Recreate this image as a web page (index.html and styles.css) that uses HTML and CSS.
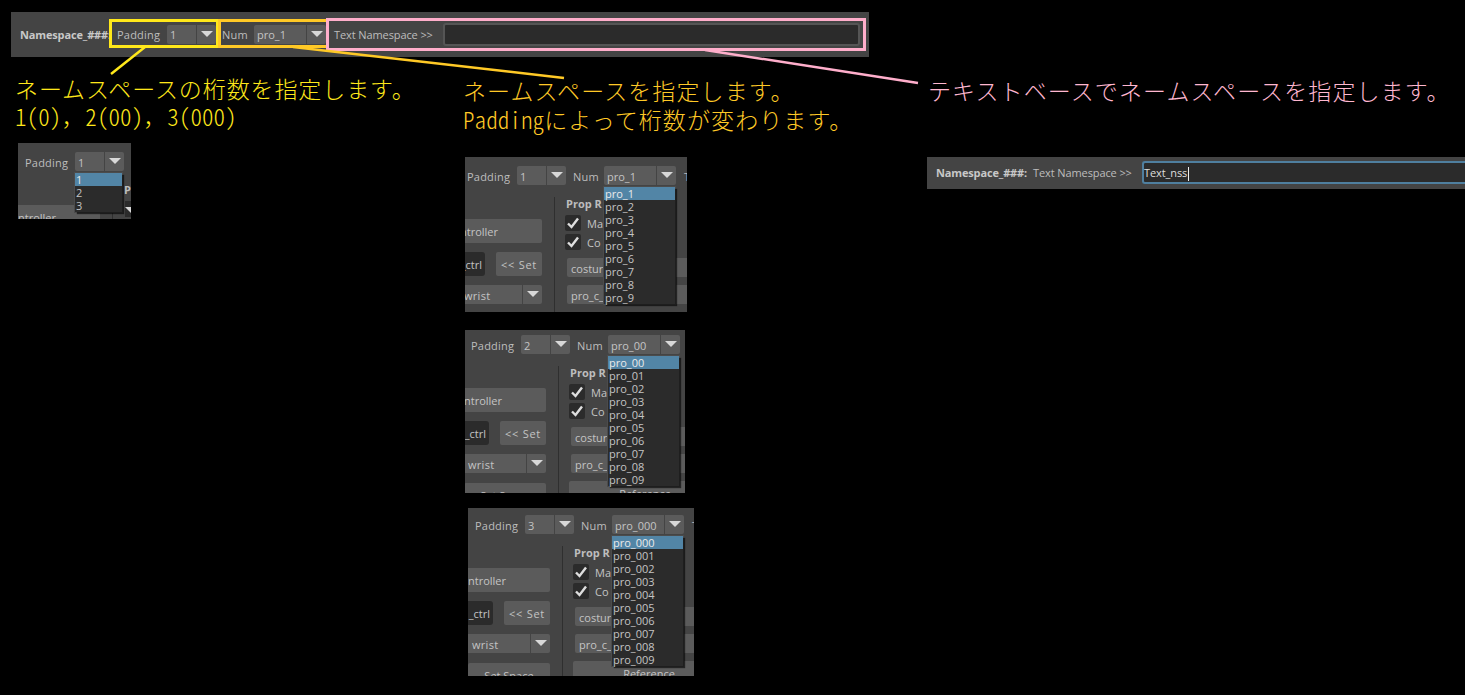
FILE: index.html
```html
<!DOCTYPE html>
<html lang="ja">

<head>
    <meta charset="UTF-8">
    <title>Namespace</title>
    <link rel="stylesheet" href="styles.css">
</head>

<body>
    <main class="canvas">
        <!-- main namespace bar -->
        <div class="bar bar-main">
            <span class="bar-title">Namespace_###:</span>
            <span class="lbl lbl-padding">Padding</span>
            <div class="combo combo-sm"><span class="combo-text">1</span><span class="combo-arrow"><i class="tri"></i></span></div>
            <span class="lbl lbl-num">Num</span>
            <div class="combo combo-lg"><span class="combo-text">pro_1</span><span class="combo-arrow"><i class="tri"></i></span></div>
            <span class="lbl lbl-text">Text Namespace &gt;&gt;</span>
            <div class="field field-main"></div>
        </div>

        <!-- annotation frames and leaders -->
        <div class="frame frame-yellow"></div>
        <div class="frame frame-orange"></div>
        <div class="frame frame-pink"></div>
        <svg class="leaders" width="1465" height="695" viewBox="0 0 1465 695">
            <line x1="145" y1="47" x2="111" y2="74" stroke="#ffe81a" stroke-width="2.5" />
            <line x1="293" y1="47" x2="564" y2="78" stroke="#ffc926" stroke-width="2.5" />
            <line x1="705" y1="50" x2="918" y2="83" stroke="#ffaecb" stroke-width="2.5" />
        </svg>

        <p class="note note-yellow">ネームスペースの桁数を指定します。<br><span class="half">1(0)</span>&#65292;<span class="half">2(00)</span>&#65292;<span class="half">3(000)</span></p>
        <p class="note note-orange">ネームスペースを指定します。<br><span class="half">Padding</span>によって桁数が変わります。</p>
        <p class="note note-pink">テキストベースでネームスペースを指定します。</p>

        <!-- padding dropdown crop -->
        <section class="crop crop-a">
            <div class="ui">
                <div class="ui-top">
                    <span class="lbl ui-padding">Padding</span>
                    <div class="combo combo-sm"><span class="combo-text">1</span><span class="combo-arrow"><i class="tri"></i></span></div>
                </div>
                <div class="ui-body">
                    <div class="col-left">
                        <div class="btn btn-ctrl">ntroller</div>
                    </div>
                    <div class="sep"></div>
                    <div class="col-right">
                        <div class="col-title">Prop R</div>
                        <span class="dark-arrow"><i class="tri"></i></span>
                    </div>
                </div>
                <ul class="list list-padding">
                    <li class="sel">1</li>
                    <li>2</li>
                    <li>3</li>
                </ul>
            </div>
        </section>

        <!-- padding 1 -->
        <section class="crop crop-b">
            <div class="ui">
                <div class="ui-top">
                    <span class="lbl ui-padding">Padding</span>
                    <div class="combo combo-sm"><span class="combo-text">1</span><span class="combo-arrow"><i class="tri"></i></span></div>
                    <span class="lbl ui-num">Num</span>
                    <div class="combo combo-lg"><span class="combo-text">pro_1</span><span class="combo-arrow"><i class="tri"></i></span></div>
                    <span class="lbl ui-t">T</span>
                </div>
                <div class="ui-body">
                    <div class="col-left">
                        <div class="btn btn-ctrl">ntroller</div>
                        <div class="row-set">
                            <div class="ctrl-field">_ctrl</div>
                            <div class="btn btn-set">&lt;&lt; Set</div>
                        </div>
                        <div class="combo combo-wrist"><span class="combo-text">wrist</span><span class="combo-arrow"><i class="tri"></i></span></div>
                    </div>
                    <div class="sep"></div>
                    <div class="col-right">
                        <div class="col-title">Prop R</div>
                        <div class="check-row"><span class="check"><svg width="16" height="16" viewBox="0 0 16 16"><path d="M3 8.5 L6.5 12 L13 3.5" fill="none" stroke="#dedede" stroke-width="2.4" /></svg></span>Ma</div>
                        <div class="check-row"><span class="check"><svg width="16" height="16" viewBox="0 0 16 16"><path d="M3 8.5 L6.5 12 L13 3.5" fill="none" stroke="#dedede" stroke-width="2.4" /></svg></span>Co</div>
                        <div class="wide wide-first">costur</div>
                        <div class="wide">pro_c_</div>
                    </div>
                </div>
                <ul class="list list-num">
                    <li class="sel">pro_1</li>
                    <li>pro_2</li>
                    <li>pro_3</li>
                    <li>pro_4</li>
                    <li>pro_5</li>
                    <li>pro_6</li>
                    <li>pro_7</li>
                    <li>pro_8</li>
                    <li>pro_9</li>
                </ul>
            </div>
        </section>

        <!-- padding 2 -->
        <section class="crop crop-c">
            <div class="ui">
                <div class="ui-top">
                    <span class="lbl ui-padding">Padding</span>
                    <div class="combo combo-sm"><span class="combo-text">2</span><span class="combo-arrow"><i class="tri"></i></span></div>
                    <span class="lbl ui-num">Num</span>
                    <div class="combo combo-lg"><span class="combo-text">pro_00</span><span class="combo-arrow"><i class="tri"></i></span></div>
                </div>
                <div class="ui-body">
                    <div class="col-left">
                        <div class="btn btn-ctrl">ntroller</div>
                        <div class="row-set">
                            <div class="ctrl-field">_ctrl</div>
                            <div class="btn btn-set">&lt;&lt; Set</div>
                        </div>
                        <div class="combo combo-wrist"><span class="combo-text">wrist</span><span class="combo-arrow"><i class="tri"></i></span></div>
                        <div class="btn btn-space">Set Space</div>
                    </div>
                    <div class="sep"></div>
                    <div class="col-right">
                        <div class="col-title">Prop R</div>
                        <div class="check-row"><span class="check"><svg width="16" height="16" viewBox="0 0 16 16"><path d="M3 8.5 L6.5 12 L13 3.5" fill="none" stroke="#dedede" stroke-width="2.4" /></svg></span>Ma</div>
                        <div class="check-row"><span class="check"><svg width="16" height="16" viewBox="0 0 16 16"><path d="M3 8.5 L6.5 12 L13 3.5" fill="none" stroke="#dedede" stroke-width="2.4" /></svg></span>Co</div>
                        <div class="wide wide-first">costur</div>
                        <div class="wide">pro_c_</div>
                        <div class="btn btn-ref">Reference</div>
                    </div>
                </div>
                <ul class="list list-num">
                    <li class="sel">pro_00</li>
                    <li>pro_01</li>
                    <li>pro_02</li>
                    <li>pro_03</li>
                    <li>pro_04</li>
                    <li>pro_05</li>
                    <li>pro_06</li>
                    <li>pro_07</li>
                    <li>pro_08</li>
                    <li>pro_09</li>
                </ul>
            </div>
        </section>

        <!-- padding 3 -->
        <section class="crop crop-d">
            <div class="ui">
                <div class="ui-top">
                    <span class="lbl ui-padding">Padding</span>
                    <div class="combo combo-sm"><span class="combo-text">3</span><span class="combo-arrow"><i class="tri"></i></span></div>
                    <span class="lbl ui-num">Num</span>
                    <div class="combo combo-lg"><span class="combo-text">pro_000</span><span class="combo-arrow"><i class="tri"></i></span></div>
                    <span class="lbl ui-t">T</span>
                </div>
                <div class="ui-body">
                    <div class="col-left">
                        <div class="btn btn-ctrl">ntroller</div>
                        <div class="row-set">
                            <div class="ctrl-field">_ctrl</div>
                            <div class="btn btn-set">&lt;&lt; Set</div>
                        </div>
                        <div class="combo combo-wrist"><span class="combo-text">wrist</span><span class="combo-arrow"><i class="tri"></i></span></div>
                        <div class="btn btn-space">Set Space</div>
                    </div>
                    <div class="sep"></div>
                    <div class="col-right">
                        <div class="col-title">Prop R</div>
                        <div class="check-row"><span class="check"><svg width="16" height="16" viewBox="0 0 16 16"><path d="M3 8.5 L6.5 12 L13 3.5" fill="none" stroke="#dedede" stroke-width="2.4" /></svg></span>Ma</div>
                        <div class="check-row"><span class="check"><svg width="16" height="16" viewBox="0 0 16 16"><path d="M3 8.5 L6.5 12 L13 3.5" fill="none" stroke="#dedede" stroke-width="2.4" /></svg></span>Co</div>
                        <div class="wide wide-first">costur</div>
                        <div class="wide">pro_c_</div>
                        <div class="btn btn-ref">Reference</div>
                    </div>
                </div>
                <ul class="list list-num">
                    <li class="sel">pro_000</li>
                    <li>pro_001</li>
                    <li>pro_002</li>
                    <li>pro_003</li>
                    <li>pro_004</li>
                    <li>pro_005</li>
                    <li>pro_006</li>
                    <li>pro_007</li>
                    <li>pro_008</li>
                    <li>pro_009</li>
                </ul>
            </div>
        </section>

        <!-- text namespace bar -->
        <div class="bar bar-text">
            <span class="bar-title">Namespace_###:</span>
            <span class="lbl lbl-text">Text Namespace &gt;&gt;</span>
            <div class="field field-focus">Text_nss<i class="caret"></i></div>
        </div>
    </main>
</body>

</html>
```

FILE: styles.css
```css
body {
    margin: 0;
    background-color: #000;
    font-family: "Open Sans", "Noto Sans", sans-serif;
    font-size: 11px;
    color: #c4c4c4;
}

.canvas {
    position: relative;
    width: 1465px;
    height: 695px;
    overflow: hidden;
}

/* namespace bars */
.bar {
    position: absolute;
    display: flex;
    align-items: center;
    background-color: #444;
    white-space: nowrap;
}

.bar-main {
    left: 11px;
    top: 12px;
    width: 849px;
    height: 45px;
    padding-left: 9px;
}

.bar-text {
    left: 927px;
    top: 157px;
    width: 529px;
    height: 31px;
    padding: 0 0 1px 9px;
}

.bar-title {
    width: 97px;
    font-weight: 700;
    letter-spacing: -0.15px;
    color: #c8c8c8;
}

.lbl {
    padding-top: 1px;
    color: #bdbdbd;
    letter-spacing: 0.2px;
}

.bar .lbl {
    padding-top: 0;
}

.bar .combo {
    line-height: 20px;
}

.lbl-padding {
    width: 50px;
}

.lbl-num {
    width: 32px;
    padding-left: 6px;
}

.lbl-text {
    width: 109px;
    letter-spacing: -0.1px;
}

.bar-main .lbl-text {
    margin-left: 8px;
}

.field {
    box-sizing: border-box;
    background-color: #2b2b2b;
    border: 2px solid #555;
    border-radius: 3px;
}

.field-main {
    width: 417px;
    height: 23px;
}

.field-focus {
    width: 323px;
    height: 23px;
    line-height: 19px;
    border-color: #4f7f9f;
    border-right: 0;
    border-radius: 3px 0 0 3px;
    letter-spacing: -0.1px;
    color: #ddd;
}

.caret {
    display: inline-block;
    width: 1px;
    height: 14px;
    margin-left: 1px;
    vertical-align: middle;
    background-color: #eee;
}

/* combo boxes */
.combo {
    display: flex;
    gap: 1px;
    height: 19px;
    line-height: 22px;
    flex: none;
}

.combo-text {
    flex: 1;
    padding-left: 3px;
    border-radius: 2px 0 0 2px;
    background-color: #5b5b5b;
    overflow: hidden;
}

.combo-arrow {
    display: flex;
    justify-content: center;
    width: 19px;
    border-radius: 0 2px 2px 0;
    background-color: #5b5b5b;
}

.tri {
    width: 0;
    height: 0;
    margin-top: 6px;
    border-left: 6px solid transparent;
    border-right: 6px solid transparent;
    border-top: 6px solid #d8d8d8;
}

.combo-sm {
    width: 49px;
}

.combo-lg {
    width: 72px;
}

.combo-wrist {
    width: 85px;
}

.combo-wrist .combo-text {
    padding-left: 7px;
    letter-spacing: 0.3px;
}

/* cropped window pieces */
.crop {
    position: absolute;
    overflow: hidden;
    background-color: #444;
}

.crop-a {
    left: 18px;
    top: 143px;
    width: 113px;
    height: 76px;
}

.crop-b {
    left: 465px;
    top: 157px;
    width: 222px;
    height: 155px;
}

.crop-c {
    left: 465px;
    top: 330px;
    width: 220px;
    height: 163px;
}

.crop-d {
    left: 468px;
    top: 508px;
    width: 226px;
    height: 168px;
}

.ui {
    position: relative;
    width: 300px;
}

.crop-a .ui {
    margin: 9px 0 0 -3px;
}

.crop-b .ui {
    margin: 9px 0 0 -8px;
}

.crop-c .ui {
    margin: 5px 0 0 -4px;
}

.crop-d .ui {
    margin: 7px 0 0 -3px;
}

.ui-top {
    display: flex;
    align-items: center;
    padding-left: 10px;
    white-space: nowrap;
}

.ui-padding {
    width: 50px;
}

.ui-num {
    width: 31px;
    padding-left: 7px;
}

.ui-t {
    margin-left: 8px;
}

.ui-body {
    display: grid;
    grid-template-columns: 85px 1px 150px;
    column-gap: 12px;
    margin-top: 12px;
}

.col-left {
    display: flex;
    flex-direction: column;
    gap: 9px;
    padding-top: 22px;
    white-space: nowrap;
}

.btn {
    height: 24px;
    line-height: 26px;
    border-radius: 2px;
    background-color: #5b5b5b;
    text-align: center;
}

.btn-ctrl {
    padding-right: 44px;
    text-align: right;
}

.row-set {
    display: flex;
    gap: 11px;
}

.ctrl-field {
    display: flex;
    justify-content: flex-end;
    box-sizing: border-box;
    width: 28px;
    height: 24px;
    line-height: 26px;
    padding-right: 3px;
    border-radius: 3px;
    background-color: #2b2b2b;
}

.btn-set {
    width: 46px;
    letter-spacing: 0.7px;
}

.btn-space {
    margin: 1px 0 0 3px;
}

.sep {
    background-color: #2f2f2f;
    height: 220px;
}

.col-right {
    white-space: nowrap;
}

.col-title {
    height: 14px;
    line-height: 14px;
    margin: 0 0 4px -1px;
    font-weight: 700;
    color: #bdbdbd;
}

.check-row {
    display: flex;
    align-items: center;
    gap: 6px;
    height: 16px;
    margin: 0 0 3px -2px;
}

.check {
    width: 16px;
    height: 16px;
    border-radius: 2px;
    background-color: #2b2b2b;
}

.wide {
    height: 19px;
    line-height: 21px;
    margin-bottom: 8px;
    padding-left: 4px;
    border-radius: 2px;
    background-color: #5b5b5b;
}

.wide-first {
    margin-top: 8px;
}

.btn-ref {
    margin: 3px 0 0 -2px;
}

.dark-arrow {
    display: flex;
    justify-content: center;
    width: 12px;
    height: 16px;
    margin-top: 4px;
    background-color: #2b2b2b;
}

/* dropdown menus */
.list {
    position: absolute;
    top: 21px;
    margin: 0;
    padding: 0;
    list-style: none;
    background-color: #2b2b2b;
    box-shadow: 2px 2px 1px rgba(0, 0, 0, 0.6), 0 0 0 1px #4c4c4c;
    color: #c4c4c4;
}

.list li {
    height: 13px;
    line-height: 13px;
    padding-left: 1px;
}

.list .sel {
    background-color: #5285a6;
    color: #eaeaea;
}

.list-padding {
    left: 60px;
    width: 47px;
}

.list-num {
    left: 147px;
    width: 71px;
}

/* annotation frames */
.frame {
    position: absolute;
    box-sizing: border-box;
    border-style: solid;
    border-width: 3px;
}

.frame-yellow {
    left: 109px;
    top: 19px;
    width: 110px;
    height: 29px;
    border-color: #ffe81a;
}

.frame-orange {
    left: 218px;
    top: 19px;
    width: 111px;
    height: 29px;
    border-color: #ffc926;
}

.frame-pink {
    left: 326px;
    top: 18px;
    width: 540px;
    height: 33px;
    border-color: #ffaecb;
}

.leaders {
    position: absolute;
    left: 0;
    top: 0;
}

/* notes */
.note {
    position: absolute;
    margin: 0;
    font-family: "Noto Sans CJK JP", sans-serif;
    font-weight: 300;
    font-size: 23px;
    letter-spacing: 1.1px;
    line-height: 29px;
    white-space: nowrap;
}

.half {
    font-feature-settings: "hwid";
    letter-spacing: 0.1px;
}

.note-yellow {
    left: 15px;
    top: 74px;
    line-height: 28px;
    letter-spacing: 0.9px;
    color: #ffe81a;
}

.note-orange {
    left: 463px;
    top: 76px;
    color: #ffc926;
}

.note-pink {
    left: 928px;
    top: 76px;
    color: #ffb7d0;
}
```
